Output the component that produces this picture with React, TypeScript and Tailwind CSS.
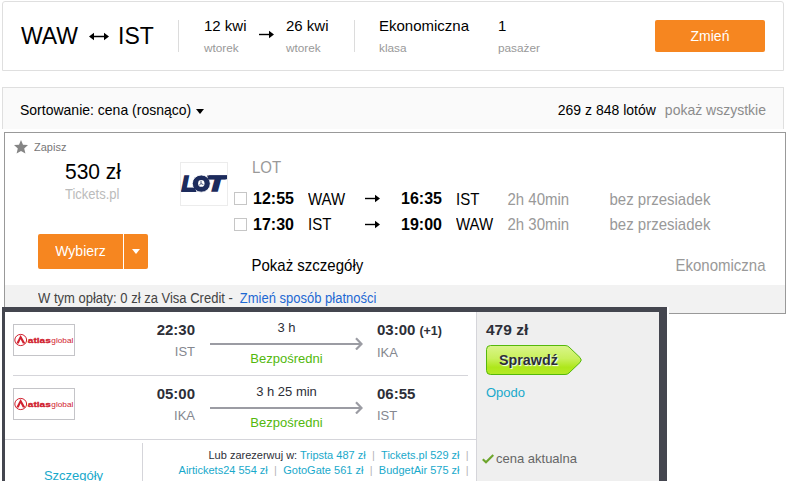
import { ReactNode } from "react";

const lotFlights = [
    { from: "WAW", depart: "12:55", to: "IST", arrive: "16:35", duration: "2h 40min" },
    { from: "IST", depart: "17:30", to: "WAW", arrive: "19:00", duration: "2h 30min" },
];

const atlasFlights = [
    { from: "IST", depart: "22:30", to: "IKA", arrive: "03:00", nextDay: true, duration: "3 h" },
    { from: "IKA", depart: "05:00", to: "IST", arrive: "06:55", nextDay: false, duration: "3 h 25 min" },
];

function ArrowRight() {
    return (
        <svg width="15" height="9" viewBox="0 0 15 9" className="shrink-0">
            <path d="M0 4.5H12" stroke="#000" strokeWidth="1.4" />
            <path d="M10 0.8L15 4.5L10 8.2Z" fill="#000" />
        </svg>
    );
}

function ArrowBoth() {
    return (
        <svg width="20" height="9" viewBox="0 0 20 9" className="shrink-0">
            <path d="M3 4.5H17" stroke="#000" strokeWidth="1.5" />
            <path d="M5 0.8L0 4.5L5 8.2Z M15 0.8L20 4.5L15 8.2Z" fill="#000" />
        </svg>
    );
}

function Labelled({ title, label, className }: { title: string; label: string; className: string }) {
    return (
        <div className={`flex flex-col gap-1 ${className}`}>
            <p className="text-[15px] leading-5">{title}</p>
            <p className="text-[11.8px] leading-4 text-[#999]">{label}</p>
        </div>
    );
}

function LotLogo() {
    return (
        <div className="h-[44px] w-[48px] shrink-0 border border-[#ececec]">
            <svg width="46" height="42" viewBox="0 0 46 42">
                <g fill="#1c2b5c" stroke="#1c2b5c" fontFamily="Liberation Sans" fontWeight="bold" fontStyle="italic" fontSize="22">
                    <text x="0.5" y="28.3" strokeWidth="1.6" textLength="14" lengthAdjust="spacingAndGlyphs">L</text>
                    <ellipse cx="20.3" cy="20.6" rx="9" ry="8.6" stroke="#fff" strokeWidth="0.8" />
                    <text x="26" y="28.3" strokeWidth="1.6" textLength="18.5" lengthAdjust="spacingAndGlyphs">T</text>
                </g>
                <path d="M1.5 24.8H14L15.5 29.1H0.3Z M26 12.4H46L44.6 16.6H27.5Z" fill="#1c2b5c" />
                <ellipse cx="20.3" cy="20.4" rx="3.2" ry="3.4" fill="#fff" />
                <path d="M20 17.8V20.6L22.4 21.6M20 20.6L18.3 22" stroke="#1c2b5c" strokeWidth="0.8" fill="none" />
            </svg>
        </div>
    );
}

function AtlasLogo() {
    return (
        <div className="mt-3 h-8 w-[62px] shrink-0 border border-[#c4c4c8]">
            <svg width="60" height="30" viewBox="0 0 60 30">
                <ellipse cx="6.7" cy="15" rx="5.9" ry="5.6" fill="#fff" stroke="#d0202e" strokeWidth="1" />
                <path d="M2.2 18.6L6.6 10L11.4 18.6H8.8L6.6 14.2L4.8 18.6Z" fill="#d0202e" />
                <g fill="#d0202e" fontFamily="Liberation Sans" fontSize="8">
                    <text x="13.8" y="17.8" fontWeight="bold" stroke="#d0202e" strokeWidth="0.3" textLength="23" lengthAdjust="spacingAndGlyphs">atlas</text>
                    <text x="37.3" y="17.8" textLength="22" lengthAdjust="spacingAndGlyphs">global</text>
                </g>
            </svg>
        </div>
    );
}

function Offer({ children }: { children: ReactNode }) {
    return <a className="text-[#19a9cb]">{children}</a>;
}

function Bar() {
    return <span className="mx-[6.3px] text-[#b5b5b8]">|</span>;
}

function SearchSummary() {
    return (
        <div className="ml-[2px] flex h-[70px] w-[782px] items-center rounded-t-[3px] border border-[#dfdfdf] pr-[18px] pl-[18px]">
            <div className="flex w-[157px] items-center text-[23px] leading-8">
                <span className="w-[68px]">WAW</span>
                <ArrowBoth />
                <span className="ml-[9px]">IST</span>
            </div>
            <div className="h-8 w-px bg-[#dcdcdc]" />
            <Labelled title="12 kwi" label="wtorek" className="ml-[25px] w-[55px]" />
            <div className="mb-1">
                <ArrowRight />
            </div>
            <Labelled title="26 kwi" label="wtorek" className="ml-[12px] w-[68px]" />
            <div className="h-8 w-px bg-[#dcdcdc]" />
            <Labelled title="Ekonomiczna" label="klasa" className="ml-[24px] w-[119px]" />
            <Labelled title="1" label="pasażer" className="" />
            <button className="ml-auto h-8 w-[110px] rounded-[2px] bg-[#f68620] text-[14px] text-white">
                <span className="block scale-y-[1.06]">Zmień</span>
            </button>
        </div>
    );
}

function SortBar() {
    return (
        <div className="mt-4 ml-[2px] flex h-[42px] w-[782px] border border-b-0 border-[#dfdfdf] bg-[#fafafa] px-[17px] pt-3 text-[14px] leading-5">
            <p className="scale-y-[1.08]">Sortowanie: cena (rosnąco)</p>
            <svg width="8" height="5" viewBox="0 0 8 5" className="mt-[9px] ml-[5px]">
                <path d="M0 0H8L4 5Z" fill="#000" />
            </svg>
            <p className="ml-auto scale-y-[1.08]">269 z 848 lotów</p>
            <p className="ml-[9px] scale-y-[1.08] text-[#8c8c8c]">pokaż wszystkie</p>
        </div>
    );
}

function LotCard() {
    return (
        <div className="mt-[3px] ml-1 flex h-[182px] w-[782px] flex-col border border-[#999]">
            <div className="flex h-[152px] shrink-0">
                <div className="w-[175px] shrink-0 pt-[6px]">
                    <div className="flex h-4 items-center pl-[9px] text-[11px] text-[#777]">
                        <svg width="14" height="14" viewBox="0 0 14 14" className="mr-[6px]">
                            <path d="M7 0L9 4.7L14 5.1L10.2 8.5L11.4 13.6L7 10.9L2.6 13.6L3.8 8.5L0 5.1L5 4.7Z" fill="#858585" />
                        </svg>
                        <p className="scale-y-[1.06] leading-4">Zapisz</p>
                    </div>
                    <p className="mt-1 scale-y-[1.08] pl-[60px] text-[21px] leading-6">530 zł</p>
                    <p className="mt-1 scale-y-[1.06] pl-[60px] text-[13px] leading-4 text-[#bbb]">Tickets.pl</p>
                    <div className="mt-[31px] ml-[33px] flex h-[35px] w-[110px] gap-px overflow-hidden rounded-[2px] text-white">
                        <button className="w-[85px] bg-[#f68620] text-[14px]">
                            <span className="block scale-y-[1.1]">Wybierz</span>
                        </button>
                        <button className="flex flex-1 items-center justify-center bg-[#f68620]">
                            <svg width="8" height="5" viewBox="0 0 8 5">
                                <path d="M0 0H8L4 5Z" fill="#fff" />
                            </svg>
                        </button>
                    </div>
                </div>
                <div className="pt-[29px]">
                    <LotLogo />
                </div>
                <div className="flex-1 pt-[25px] pl-[6px] text-[15px]">
                    <p className="mb-2 scale-y-[1.06] pl-[18px] leading-5 text-[#999]">LOT</p>
                    {lotFlights.map((flight) => (
                        <div key={flight.depart} className="flex h-[25.5px] items-center leading-[25px]">
                            <span className="mr-[6px] h-[13px] w-[13px] border border-[#c6c6c6]" />
                            <b className="w-[55px] scale-y-[1.08] text-[16px]">{flight.depart}</b>
                            <span className="w-[57px] scale-y-[1.06] pt-px">{flight.from}</span>
                            <ArrowRight />
                            <b className="ml-[21px] w-[55px] scale-y-[1.08] text-[16px]">{flight.arrive}</b>
                            <span className="w-[51.5px] scale-y-[1.06] pt-px">{flight.to}</span>
                            <span className="w-[102px] scale-y-[1.08] pt-px text-[#999]">{flight.duration}</span>
                            <span className="scale-y-[1.08] pt-px text-[#999]">bez przesiadek</span>
                        </div>
                    ))}
                    <div className="mt-[19px] flex scale-y-[1.08] justify-between pr-[19.5px] pl-[17.5px] leading-5">
                        <p>Pokaż szczegóły</p>
                        <p className="text-[#999]">Ekonomiczna</p>
                    </div>
                </div>
            </div>
            <div className="flex-1 bg-[#f2f2f2] pt-[5px] pl-[33px] text-[13px] leading-[18px] text-[#444]">
                <p className="scale-y-[1.06]">
                    W tym opłaty: 0 zł za Visa Credit -<a className="ml-[7px] text-[#1d68d2]">Zmień sposób płatności</a>
                </p>
            </div>
        </div>
    );
}

function AtlasFlight({ flight }: { flight: (typeof atlasFlights)[number] }) {
    return (
        <div className="flex h-full">
            <AtlasLogo />
            <div className="w-[120px] pt-2 text-right">
                <p className="text-[15px] leading-5 font-bold">{flight.depart}</p>
                <p className="mt-[3px] text-[13px] leading-[18px] text-[#85878f]">{flight.from}</p>
            </div>
            <div className="ml-[15px] w-[153px] pt-[7px] text-center text-[13px] leading-[18px]">
                <p>{flight.duration}</p>
                <svg width="153" height="13" viewBox="0 0 153 13" className="block">
                    <path d="M0 7H151" stroke="#9b9ca3" strokeWidth="2" />
                    <path d="M146 1.3L151.5 7L146 12.5" stroke="#9b9ca3" strokeWidth="2.2" fill="none" />
                </svg>
                <p className="text-[#52b80c]">Bezpośredni</p>
            </div>
            <div className="ml-[14px] pt-2">
                <p className="text-[15px] leading-5 font-bold">
                    {flight.arrive}
                    {flight.nextDay && <span className="ml-1 text-[12.5px]">(+1)</span>}
                </p>
                <p className="mt-[3px] text-[13px] leading-[18px] text-[#85878f]">{flight.to}</p>
            </div>
        </div>
    );
}

function AtlasCard() {
    return (
        <div className="relative -mt-[7px] ml-[2px] h-[174px] w-[667px] bg-white pr-[2px]">
            <div className="flex h-full border-t-[5px] border-r-8 border-l-[3px] border-[#44464f] text-[#2d2f38]">
                <div className="w-[471px]">
                    <div className="mx-2 h-16 border-b border-[#d5d5da]">
                        <AtlasFlight flight={atlasFlights[0]} />
                    </div>
                    <div className="h-16 border-b border-[#d5d5da] px-2">
                        <AtlasFlight flight={atlasFlights[1]} />
                    </div>
                    <div className="flex h-[41px]">
                        <div className="mt-[3px] w-[138px] shrink-0 border-r border-[#d5d5da] pt-[24px] text-center text-[13px] leading-[18px]">
                            <a className="text-[#19a9cb]">Szczegóły</a>
                        </div>
                        <div className="flex-1 pt-2 pr-px text-right text-[11px] leading-[15px] whitespace-nowrap">
                            <p>
                                Lub zarezerwuj w: <Offer>Tripsta 487 zł</Offer>
                                <Bar />
                                <Offer>Tickets.pl 529 zł</Offer>
                                <Bar />
                            </p>
                            <p>
                                <Offer>Airtickets24 554 zł</Offer>
                                <Bar />
                                <Offer>GotoGate 561 zł</Offer>
                                <Bar />
                                <Offer>BudgetAir 575 zł</Offer>
                                <Bar />
                            </p>
                        </div>
                    </div>
                </div>
                <div className="flex-1 border-l border-[#d5d5da] bg-[#efefef] pt-2 pl-[9px]">
                    <p className="text-[15.5px] leading-5 font-bold">479 zł</p>
                    <button className="relative mt-[5px] block h-[30px] w-[96px]">
                        <svg width="96" height="30" viewBox="0 0 96 30" className="absolute inset-0">
                            <defs>
                                <linearGradient id="lime" x1="0" y1="0" x2="0" y2="1">
                                    <stop offset="0" stopColor="#daf58b" />
                                    <stop offset="0.45" stopColor="#c9f05c" />
                                    <stop offset="0.75" stopColor="#aee71b" />
                                    <stop offset="1" stopColor="#b4ea25" />
                                </linearGradient>
                            </defs>
                            <path d="M4.5 0.5H79Q81.5 0.5 83 2L94 12.5Q96.5 15 94 17.5L83 28Q81.5 29.5 79 29.5H4.5Q0.5 29.5 0.5 25.5V4.5Q0.5 0.5 4.5 0.5Z" fill="url(#lime)" stroke="#55b80b" />
                        </svg>
                        <span className="relative block pl-[13px] text-left text-[14.3px] leading-[30px] font-bold [text-shadow:1px_1px_1px_#fff]">Sprawdź</span>
                    </button>
                    <a className="mt-[9px] block text-[13px] leading-[18px] text-[#19a9cb]">Opodo</a>
                    <div className="mt-12 -ml-[4px] flex items-center text-[13px] leading-[18px] text-[#666]">
                        <svg width="12" height="10" viewBox="0 0 12 10" className="mr-[2px]">
                            <path d="M0.8 5.2L4 8.3L11.3 1" stroke="#6da52c" strokeWidth="2.2" fill="none" />
                        </svg>
                        cena aktualna
                    </div>
                </div>
            </div>
        </div>
    );
}

export default function App() {
    return (
        <div className="h-[481px] w-[797px] overflow-hidden bg-white pt-px font-['Liberation_Sans',Arial,sans-serif] text-black">
            <SearchSummary />
            <SortBar />
            <LotCard />
            <AtlasCard />
        </div>
    );
}
